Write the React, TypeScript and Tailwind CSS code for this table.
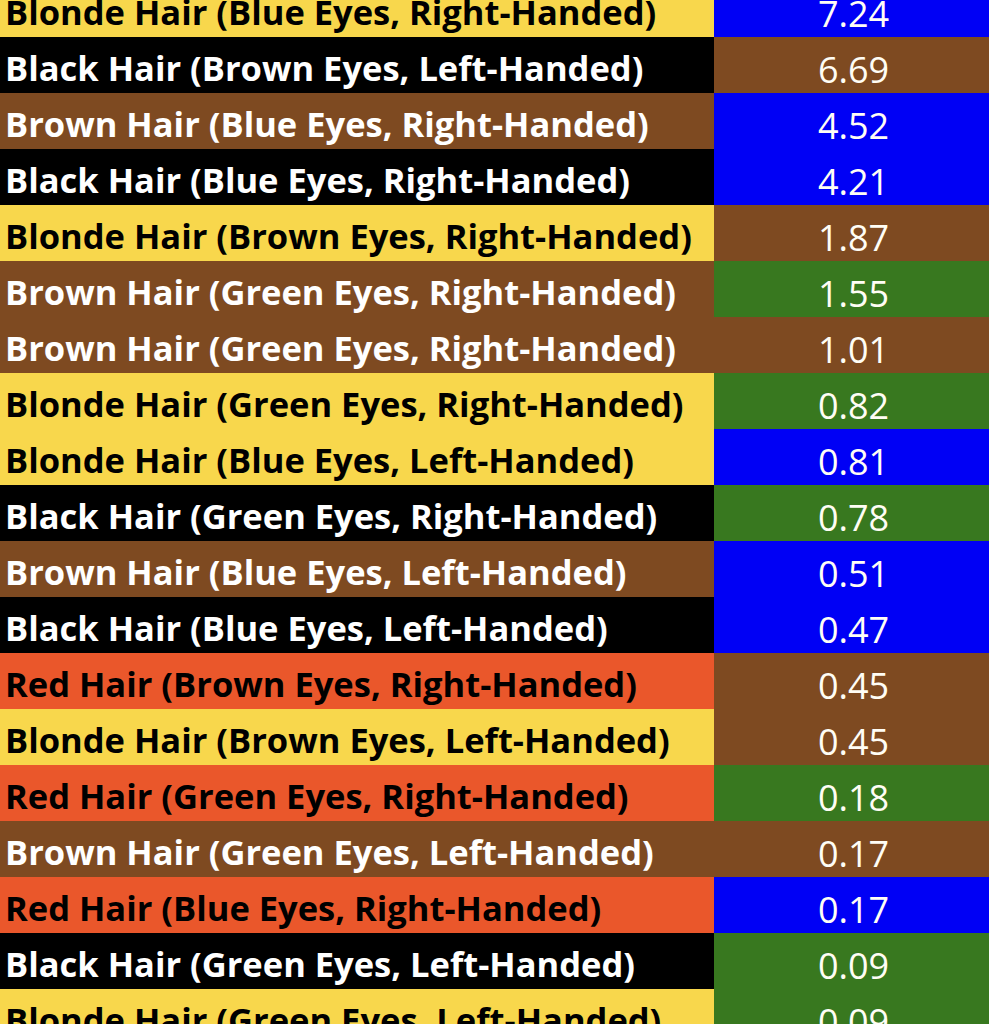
import React from "react";

type Row = { label: string; value: string; bg: string; vbg: string };

const Y = "bg-[#f8d74c] text-black";
const K = "bg-black text-white";
const B = "bg-[#7e4a21] text-white";
const R = "bg-[#ea572b] text-black";
const VB = "bg-[#0000f5]";
const VN = "bg-[#7e4a21]";
const VG = "bg-[#38781f]";

const rows: Row[] = [
  { label: "Blonde Hair (Blue Eyes, Right-Handed)", value: "7.24", bg: Y, vbg: VB },
  { label: "Black Hair (Brown Eyes, Left-Handed)", value: "6.69", bg: K, vbg: VN },
  { label: "Brown Hair (Blue Eyes, Right-Handed)", value: "4.52", bg: B, vbg: VB },
  { label: "Black Hair (Blue Eyes, Right-Handed)", value: "4.21", bg: K, vbg: VB },
  { label: "Blonde Hair (Brown Eyes, Right-Handed)", value: "1.87", bg: Y, vbg: VN },
  { label: "Brown Hair (Green Eyes, Right-Handed)", value: "1.55", bg: B, vbg: VG },
  { label: "Brown Hair (Green Eyes, Right-Handed)", value: "1.01", bg: B, vbg: VN },
  { label: "Blonde Hair (Green Eyes, Right-Handed)", value: "0.82", bg: Y, vbg: VG },
  { label: "Blonde Hair (Blue Eyes, Left-Handed)", value: "0.81", bg: Y, vbg: VB },
  { label: "Black Hair (Green Eyes, Right-Handed)", value: "0.78", bg: K, vbg: VG },
  { label: "Brown Hair (Blue Eyes, Left-Handed)", value: "0.51", bg: B, vbg: VB },
  { label: "Black Hair (Blue Eyes, Left-Handed)", value: "0.47", bg: K, vbg: VB },
  { label: "Red Hair (Brown Eyes, Right-Handed)", value: "0.45", bg: R, vbg: VN },
  { label: "Blonde Hair (Brown Eyes, Left-Handed)", value: "0.45", bg: Y, vbg: VN },
  { label: "Red Hair (Green Eyes, Right-Handed)", value: "0.18", bg: R, vbg: VG },
  { label: "Brown Hair (Green Eyes, Left-Handed)", value: "0.17", bg: B, vbg: VN },
  { label: "Red Hair (Blue Eyes, Right-Handed)", value: "0.17", bg: R, vbg: VB },
  { label: "Black Hair (Green Eyes, Left-Handed)", value: "0.09", bg: K, vbg: VG },
  { label: "Blonde Hair (Green Eyes, Left-Handed)", value: "0.09", bg: Y, vbg: VG },
];

export default function App() {
  return (
    <div className="w-[989px] h-[1024px] overflow-hidden bg-white font-['Open_Sans','Noto_Sans',sans-serif]">
      <div className="-mt-[19px] flex flex-col">
        {rows.map((r, i) => (
          <div key={i} className="flex h-[56px]">
            <div className={`w-[714px] h-full flex items-center pl-[5px] pt-[6px] text-[34.5px] leading-none font-bold whitespace-nowrap ${r.bg}`}>
              {r.label}
            </div>
            <div className={`flex-1 h-full flex items-center justify-center pt-[9px] pl-[4px] text-[36px] leading-none text-[#fffdf5] ${r.vbg}`}>
              {r.value}
            </div>
          </div>
        ))}
      </div>
    </div>
  );
}
